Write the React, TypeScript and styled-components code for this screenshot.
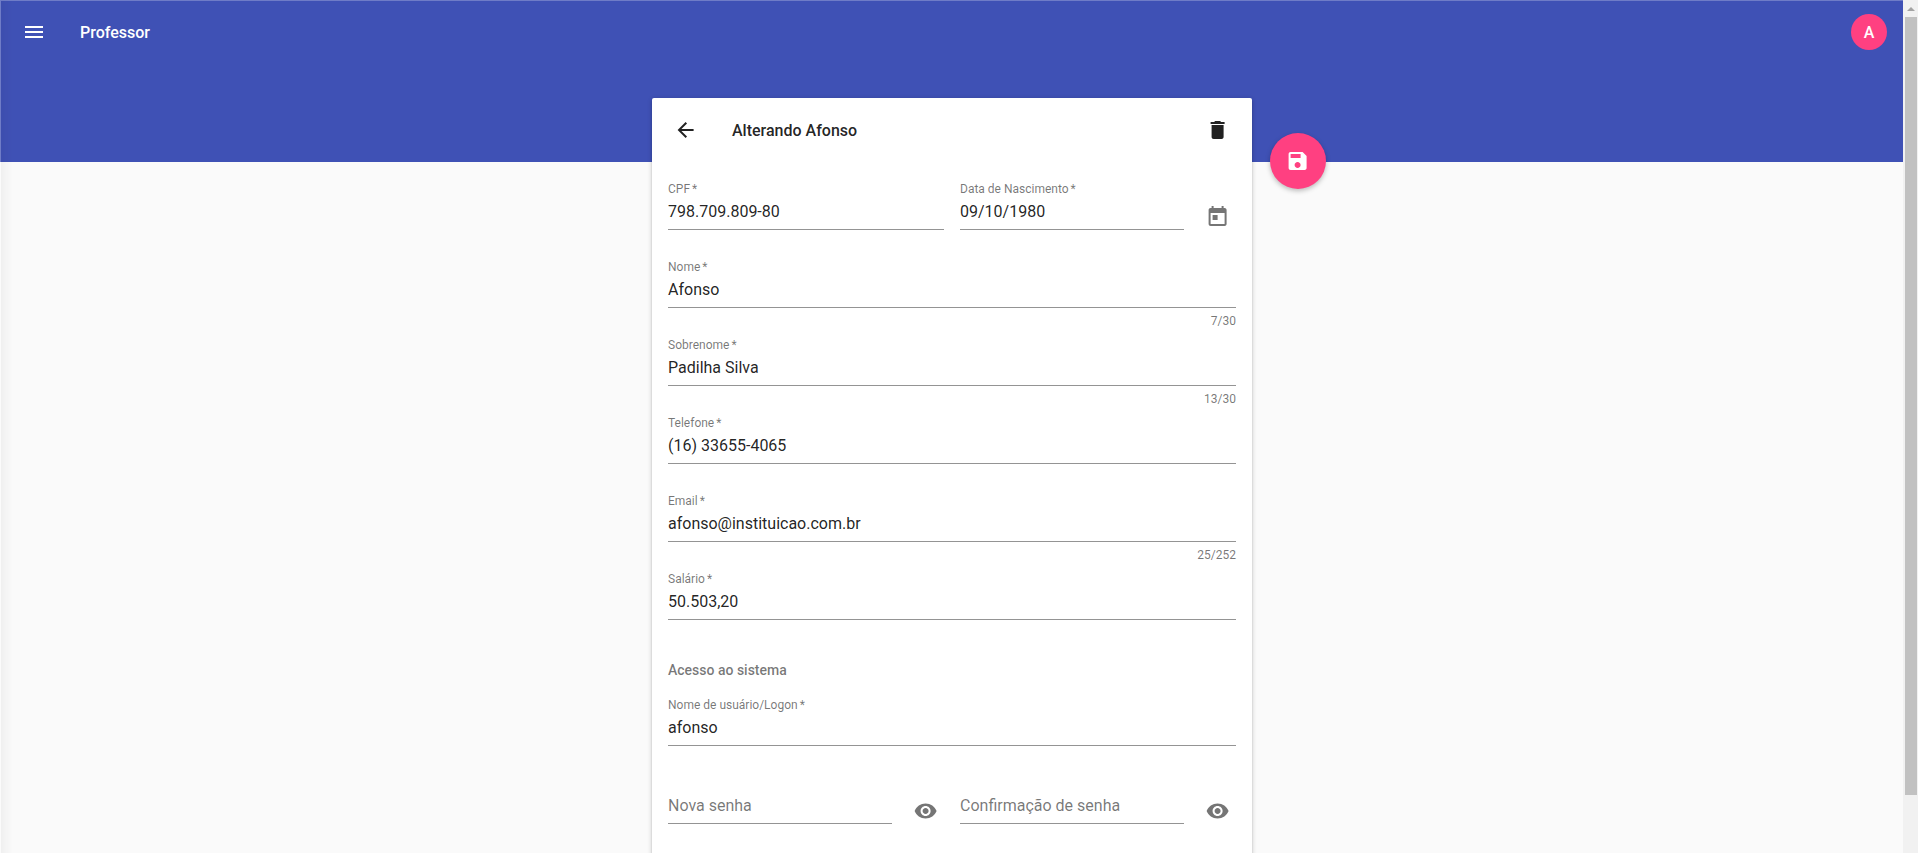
import React from "react";
import styled, { createGlobalStyle } from "styled-components";

const GlobalStyle = createGlobalStyle`
  *, *::before, *::after { box-sizing: border-box; }
  body { margin: 0; overflow: hidden; background: #fafafa; font-family: Roboto, "Liberation Sans", sans-serif; color: rgba(0, 0, 0, 0.87); }
  button { border: 0; padding: 0; background: none; color: inherit; font: inherit; cursor: pointer; }
`;

const Page = styled.div`
  display: flex;
  width: 100%;
  height: 853px;
  overflow: hidden;
`;

const Content = styled.div`
  position: relative;
  flex: 1;
  min-width: 0;
  height: 853px;
  overflow: hidden;
  background: linear-gradient(#3f51b5 162px, #fafafa 162px);
`;

const EdgeShade = styled.div`
  position: absolute;
  inset: 0;
  pointer-events: none;
  border-top: 1px solid rgba(255, 255, 255, 0.25);
  border-left: 1px solid rgba(255, 255, 255, 0.25);
  background: linear-gradient(90deg, rgba(0, 0, 0, 0.04), rgba(0, 0, 0, 0) 12px);
`;

const Toolbar = styled.header`
  display: flex;
  align-items: center;
  height: 64px;
  padding: 0 16px 0 22px;
  color: #fff;
`;

const ToolbarTitle = styled.h1`
  flex: 1;
  margin: 0 0 0 34px;
  padding-top: 2px;
  font-size: 16px;
  line-height: 24px;
  font-weight: 500;
`;

const Avatar = styled.div`
  width: 36px;
  height: 36px;
  border-radius: 50%;
  background: #ff4081;
  font-size: 16px;
  line-height: 37px;
  font-weight: 500;
  text-align: center;
`;

const CardArea = styled.main`
  position: relative;
  width: 600px;
  margin: 34px auto 0 652px;
`;

const Card = styled.section`
  height: 830px;
  border-radius: 2px;
  background: #fff;
  box-shadow: 0 3px 1px -2px rgba(0, 0, 0, 0.2), 0 2px 2px 0 rgba(0, 0, 0, 0.14), 0 1px 5px 0 rgba(0, 0, 0, 0.2);
`;

const CardHeader = styled.div`
  display: flex;
  align-items: center;
  height: 64px;
  padding: 0 22px;
`;

const CardTitle = styled.h2`
  flex: 1;
  margin: 0 0 0 34px;
  padding-top: 2px;
  font-size: 16px;
  line-height: 24px;
  font-weight: 500;
`;

const IconButton = styled.button<{ $muted?: boolean }>`
  display: flex;
  width: 24px;
  height: 24px;
  flex: none;
  color: ${(p) => (p.$muted ? "rgba(0, 0, 0, 0.54)" : "inherit")};
`;

const SaveButton = styled.button`
  position: absolute;
  top: 35px;
  left: 618px;
  display: flex;
  align-items: center;
  justify-content: center;
  width: 56px;
  height: 56px;
  border-radius: 50%;
  background: #ff4081 !important;
  color: #fff !important;
  box-shadow: 0 2px 5px 0 rgba(0, 0, 0, 0.26);
`;

const Form = styled.form`
  padding: 12px 16px 0;
`;

const Row = styled.div`
  display: grid;
  grid-auto-flow: column;
  grid-auto-columns: 1fr;
  column-gap: 16px;
  height: 78px;
`;

const Cell = styled.div`
  display: flex;
  align-items: flex-start;
  min-width: 0;
`;

const Field = styled.label`
  flex: 1;
  display: flex;
  flex-direction: column;
`;

const Label = styled.span`
  height: 14px;
  margin-top: 8px;
  font-size: 12px;
  line-height: 14px;
  color: rgba(0, 0, 0, 0.54);
`;

const Required = styled.span`
  margin-left: 2px;
`;

const Value = styled.span<{ $empty: boolean }>`
  height: 34px;
  border-bottom: 1px solid rgba(0, 0, 0, 0.42);
  font-size: 16px;
  line-height: 32px;
  color: ${(p) => (p.$empty ? "rgba(0, 0, 0, 0.54)" : "inherit")};
`;

const Counter = styled.span`
  margin-top: 6px;
  font-size: 12px;
  line-height: 14px;
  text-align: right;
  color: rgba(0, 0, 0, 0.54);
`;

const Suffix = styled.div`
  padding: 31px 6px 0 22px;
`;

const SectionTitle = styled.h3`
  height: 48px;
  margin: 0;
  padding-top: 18px;
  font-size: 14px;
  line-height: 20px;
  font-weight: 500;
  color: rgba(0, 0, 0, 0.54);
`;

const Scrollbar = styled.div`
  width: 15px;
  padding: 0 1px 0 2px;
  background: #f1f1f1;
`;

const ScrollArrow = styled.div`
  display: flex;
  align-items: center;
  justify-content: center;
  height: 17px;
`;

const ScrollThumb = styled.div`
  height: 778px;
  background: #c1c1c1;
`;

const paths = {
  menu: "M3 18h18v-2H3v2zm0-5h18v-2H3v2zm0-7v2h18V6H3z",
  back: "M20 11H7.83l5.59-5.59L12 4l-8 8 8 8 1.41-1.41L7.83 13H20v-2z",
  trash: "M6 19c0 1.1.9 2 2 2h8c1.1 0 2-.9 2-2V7H6v12zM19 4h-3.5l-1-1h-5l-1 1H5v2h14V4z",
  save: "M17 3H5c-1.11 0-2 .9-2 2v14c0 1.1.89 2 2 2h14c1.1 0 2-.9 2-2V7l-4-4zm-5 16c-1.66 0-3-1.34-3-3s1.34-3 3-3 3 1.34 3 3-1.34 3-3 3zm3-10H5V5h10v4z",
  today: "M19 3h-1V1h-2v2H8V1H6v2H5c-1.11 0-1.99.9-1.99 2L3 19c0 1.1.89 2 2 2h14c1.1 0 2-.9 2-2V5c0-1.1-.9-2-2-2zm0 16H5V8h14v11zM7 10h5v5H7z",
  eye: "M12 4.5C7 4.5 2.73 7.61 1 12c1.73 4.39 6 7.5 11 7.5s9.27-3.11 11-7.5c-1.73-4.39-6-7.5-11-7.5zM12 17c-2.76 0-5-2.24-5-5s2.24-5 5-5 5 2.24 5 5-2.24 5-5 5zm0-8c-1.66 0-3 1.34-3 3s1.34 3 3 3 3-1.34 3-3-1.34-3-3-3z",
};

const Icon = ({ name }: { name: keyof typeof paths }) => (
  <svg width="24" height="24" viewBox={name === "menu" ? "0 0 24 24" : "0.4 0 24 24"} fill="currentColor">
    <path d={paths[name]} />
  </svg>
);

type InputProps = {
  label: string;
  value?: string;
  counter?: string;
  icon?: "today" | "eye";
};

const Input = ({ label, value, counter, icon }: InputProps) => (
  <Cell>
    <Field>
      <Label>{value && <>{label}<Required>*</Required></>}</Label>
      <Value $empty={!value}>{value ?? label}</Value>
      {counter && <Counter>{counter}</Counter>}
    </Field>
    {icon && (
      <Suffix>
        <IconButton type="button" $muted aria-label={label}>
          <Icon name={icon} />
        </IconButton>
      </Suffix>
    )}
  </Cell>
);

export default function App() {
  return (
    <>
      <GlobalStyle />
      <Page>
        <Content>
          <Toolbar>
            <IconButton aria-label="Menu"><Icon name="menu" /></IconButton>
            <ToolbarTitle>Professor</ToolbarTitle>
            <Avatar>A</Avatar>
          </Toolbar>
          <CardArea>
            <Card>
              <CardHeader>
                <IconButton aria-label="Voltar"><Icon name="back" /></IconButton>
                <CardTitle>Alterando Afonso</CardTitle>
                <IconButton aria-label="Excluir"><Icon name="trash" /></IconButton>
              </CardHeader>
              <Form>
                <Row>
                  <Input label="CPF" value="798.709.809-80" />
                  <Input label="Data de Nascimento" value="09/10/1980" icon="today" />
                </Row>
                <Row><Input label="Nome" value="Afonso" counter="7/30" /></Row>
                <Row><Input label="Sobrenome" value="Padilha Silva" counter="13/30" /></Row>
                <Row><Input label="Telefone" value="(16) 33655-4065" /></Row>
                <Row><Input label="Email" value="afonso@instituicao.com.br" counter="25/252" /></Row>
                <Row><Input label="Salário" value="50.503,20" /></Row>
                <SectionTitle>Acesso ao sistema</SectionTitle>
                <Row><Input label="Nome de usuário/Logon" value="afonso" /></Row>
                <Row>
                  <Input label="Nova senha" icon="eye" />
                  <Input label="Confirmação de senha" icon="eye" />
                </Row>
              </Form>
            </Card>
            <SaveButton aria-label="Salvar"><Icon name="save" /></SaveButton>
          </CardArea>
          <EdgeShade />
        </Content>
        <Scrollbar>
          <ScrollArrow>
            <svg width="8" height="4" viewBox="0 0 8 4" fill="#a3a3a3"><path d="M0 4L4 0l4 4z" /></svg>
          </ScrollArrow>
          <ScrollThumb />
        </Scrollbar>
      </Page>
    </>
  );
}
